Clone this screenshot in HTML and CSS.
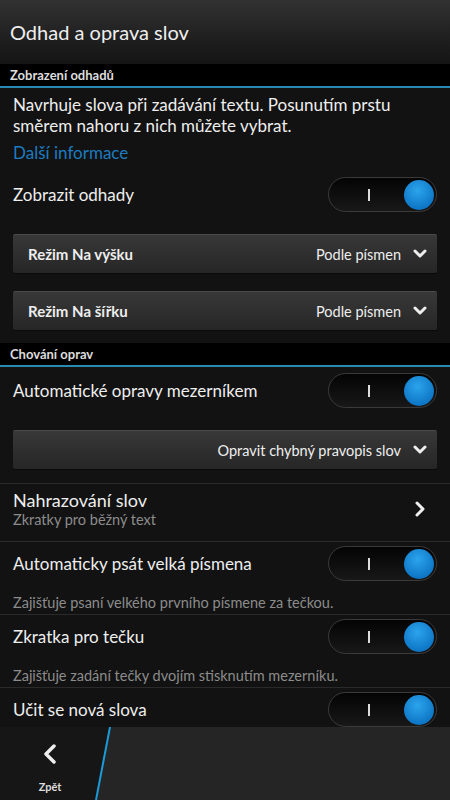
FILE: index.html
```html
<!DOCTYPE html>
<html>
<head>
	<meta charset="utf-8">
	<title>Odhad a oprava slov</title>
	<link rel="stylesheet" href="styles.css">
</head>
<body>
	<div class="screen">
		<header class="titlebar">
			<h1>Odhad a oprava slov</h1>
		</header>

		<main class="content">
			<div class="section-head">Zobrazení odhadů</div>
			<p class="desc">Navrhuje slova při zadávání textu. Posunutím prstu směrem nahoru z nich můžete vybrat.</p>
			<a class="link" href="#">Další informace</a>

			<div class="toggle-line first">
				<span class="label">Zobrazit odhady</span>
				<span class="toggle"><i></i><b></b></span>
			</div>

			<div class="dropdown dd-first">
				<span class="dd-title">Režim Na výšku</span>
				<span class="dd-value">Podle písmen</span>
				<svg class="chev" width="14" height="10" viewBox="0 0 14 10"><polyline points="2,2 7,7 12,2" fill="none" stroke="#eee" stroke-width="3" stroke-linecap="round" stroke-linejoin="round"/></svg>
			</div>
			<div class="dropdown">
				<span class="dd-title">Režim Na šířku</span>
				<span class="dd-value">Podle písmen</span>
				<svg class="chev" width="14" height="10" viewBox="0 0 14 10"><polyline points="2,2 7,7 12,2" fill="none" stroke="#eee" stroke-width="3" stroke-linecap="round" stroke-linejoin="round"/></svg>
			</div>

			<div class="section-head second">Chování oprav</div>

			<div class="toggle-line after-head">
				<span class="label">Automatické opravy mezerníkem</span>
				<span class="toggle"><i></i><b></b></span>
			</div>

			<div class="dropdown dd-first">
				<span class="dd-title"></span>
				<span class="dd-value">Opravit chybný pravopis slov</span>
				<svg class="chev" width="14" height="10" viewBox="0 0 14 10"><polyline points="2,2 7,7 12,2" fill="none" stroke="#eee" stroke-width="3" stroke-linecap="round" stroke-linejoin="round"/></svg>
			</div>

			<div class="setting nav">
				<div class="nav-text">
					<div class="nav-title">Nahrazování slov</div>
					<div class="sub">Zkratky pro běžný text</div>
				</div>
				<svg width="12" height="16" viewBox="0 0 12 16"><polyline points="3,2 9,8 3,14" fill="none" stroke="#eee" stroke-width="3" stroke-linecap="round" stroke-linejoin="round"/></svg>
			</div>

			<div class="setting">
				<div class="toggle-line">
					<span class="label">Automaticky psát velká písmena</span>
					<span class="toggle"><i></i><b></b></span>
				</div>
				<div class="sub hint">Zajišťuje psaní velkého prvního písmene za tečkou.</div>
			</div>

			<div class="setting">
				<div class="toggle-line">
					<span class="label">Zkratka pro tečku</span>
					<span class="toggle"><i></i><b></b></span>
				</div>
				<div class="sub hint">Zajišťuje zadání tečky dvojím stisknutím mezerníku.</div>
			</div>

			<div class="setting">
				<div class="toggle-line">
					<span class="label">Učit se nová slova</span>
					<span class="toggle"><i></i><b></b></span>
				</div>
			</div>
		</main>

		<footer class="actionbar">
			<!-- slanted divider between back button and the rest of the bar -->
			<svg class="bar-bg" width="450" height="73" viewBox="0 0 450 73">
				<polygon points="110,0 450,0 450,73 96,73" fill="#252525"/>
				<line x1="110" y1="0" x2="96" y2="73" stroke="#1b9ad8" stroke-width="2"/>
			</svg>
			<div class="back">
				<svg width="16" height="22" viewBox="0 0 16 22"><polyline points="12,3 4,11 12,19" fill="none" stroke="#eee" stroke-width="3.5" stroke-linecap="round" stroke-linejoin="round"/></svg>
				<span>Zpět</span>
			</div>
		</footer>
	</div>
</body>
</html>
```

FILE: styles.css
```css
html, body{
	margin: 0;
	padding: 0;
}
body{
	background: #121212;
	color: #eee;
	font-family: Lato, "Open Sans", sans-serif;
}
.screen{
	width: 450px;
	height: 800px;
	display: flex;
	flex-direction: column;
	overflow: hidden;
}
.titlebar{
	height: 64px;
	flex: none;
	display: flex;
	align-items: center;
	padding: 0 10px;
	background: linear-gradient(#323232, #1c1c1c 70%, #151515);
}
.titlebar h1{
	margin: 0;
	font-size: 20px;
	font-weight: normal;
	color: #eee;
}
.content{
	flex: 1;
	overflow: hidden;
}
.section-head{
	height: 22px;
	line-height: 22px;
	background: #000;
	border-bottom: 2px solid #2889b3;
	padding-left: 10px;
	font-size: 13px;
	font-weight: bold;
	color: #ddd;
}
.section-head.second{
	margin-top: 13px;
}
.desc{
	margin: 6px 40px 0 13px;
	font-size: 17px;
	line-height: 21px;
}
.link{
	display: block;
	margin: 6px 13px 0;
	font-size: 17px;
	line-height: 21px;
	color: #1d7cc0;
	text-decoration: none;
}
.toggle-line{
	display: flex;
	align-items: center;
	justify-content: space-between;
}
.toggle-line.first{
	margin: 14px 13px 0;
}
.toggle-line.after-head{
	margin: 6px 13px 0;
}
.label{
	font-size: 17px;
}
.toggle{
	width: 66px;
	height: 33px;
	border: 1px solid #3a3a3a;
	border-radius: 18px;
	background: linear-gradient(#040404, #181818);
	display: flex;
	align-items: center;
	justify-content: space-between;
	padding: 0 2px 0 39px;
}
.toggle i{
	width: 2px;
	height: 12px;
	background: #ddd;
}
.toggle b{
	width: 30px;
	height: 30px;
	border-radius: 50%;
	background: radial-gradient(circle at 45% 35%, #2ca4ec, #0c74c4 75%, #085a9c);
}
.dropdown{
	margin: 18px 13px 0;
	height: 38px;
	display: flex;
	align-items: center;
	padding: 0 10px 0 15px;
	background: linear-gradient(#383838, #262626);
	border-top: 1px solid #4a4a4a;
	border-radius: 2px;
	box-shadow: 0 1px 0 #0a0a0a;
}
.dropdown.dd-first{
	margin-top: 22px;
}
.dd-title{
	flex: 1;
	font-size: 15px;
	font-weight: bold;
}
.dd-value{
	font-size: 14.5px;
	margin-right: 12px;
}
.chev{
	display: block;
}
.setting{
	border-top: 1px solid #2a2a2a;
	padding: 0 13px;
}
.nav{
	margin-top: 14px;
	display: flex;
	align-items: center;
	justify-content: space-between;
	padding-top: 5px;
	padding-bottom: 12px;
	padding-right: 24px;
}
.nav-title{
	font-size: 18px;
	line-height: 22px;
}
.sub{
	font-size: 14.5px;
	line-height: 18px;
	color: #8c8c8c;
}
.setting .toggle-line{
	margin-top: 4px;
}
.hint{
	margin-top: 13px;
	padding-bottom: 2px;
}
.actionbar{
	position: relative;
	height: 73px;
	flex: none;
	background: #161616;
}
.bar-bg{
	position: absolute;
	left: 0;
	top: 0;
}
.back{
	position: relative;
	width: 100px;
	height: 73px;
	display: flex;
	flex-direction: column;
	align-items: center;
	padding-top: 16px;
	box-sizing: border-box;
}
.back span{
	margin-top: 15px;
	font-size: 11px;
	font-weight: bold;
	color: #ddd;
}
```
